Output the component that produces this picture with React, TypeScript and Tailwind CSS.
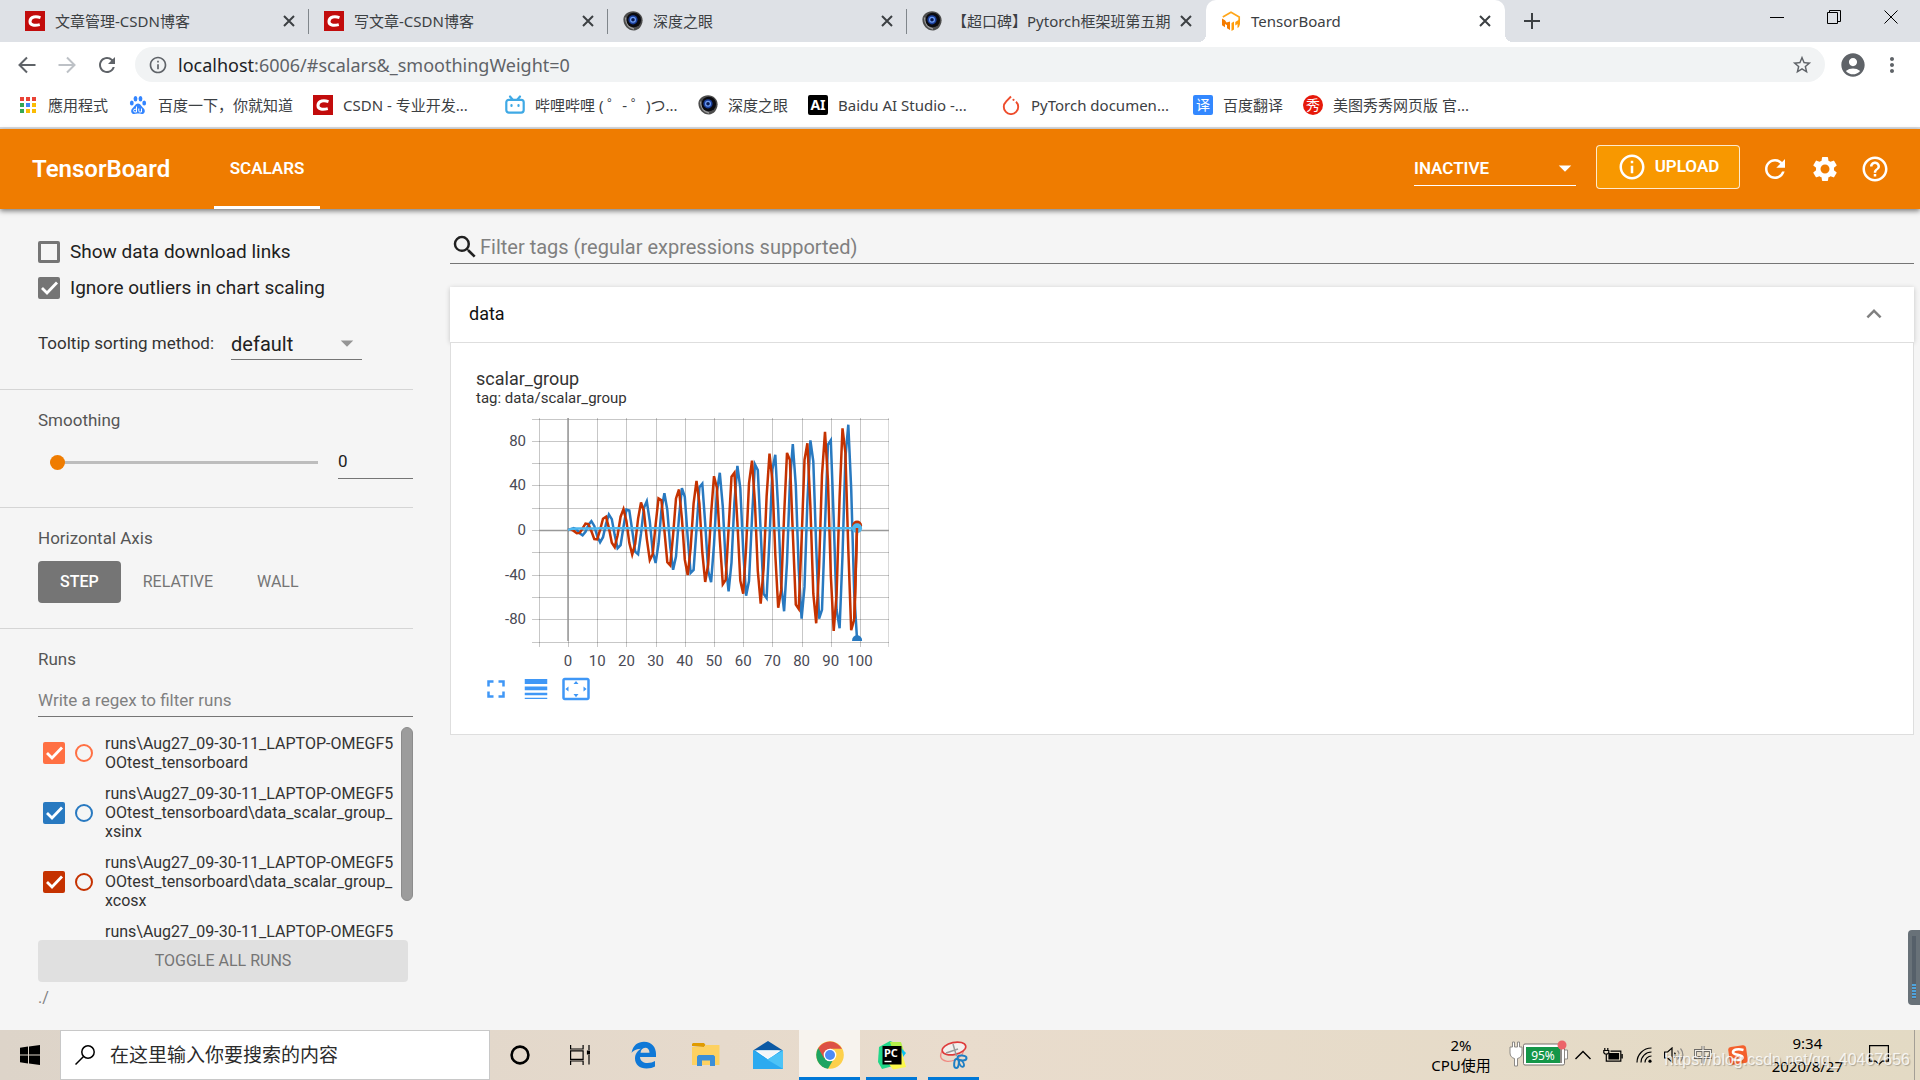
import { useState, type ReactNode } from "react";
import {
  MdAccountCircle,
  MdArrowDropDown,
  MdExpandLess,
  MdFullscreen,
  MdHelpOutline,
  MdInfoOutline,
  MdLineWeight,
  MdMoreVert,
  MdRefresh,
  MdSearch,
  MdSettings,
  MdSettingsOverscan,
  MdStarBorder,
} from "react-icons/md";

const uiFont = 'font-["Noto_Sans","Noto_Sans_CJK_SC",sans-serif]';

/* ---------- favicons ---------- */

function CsdnIcon() {
  return (
    <svg viewBox="0 0 20 20" className="size-5 shrink-0">
      <rect width="20" height="20" fill="#c20c0c" />
      <path d="M15.500 6.600C11 5.200 5.400 5.400 5 10.200c-.2 4.400 4.800 4.600 9.800 3.400" fill="none" stroke="#fff" strokeWidth="3" />
    </svg>
  );
}

function EyeIcon() {
  return (
    <svg viewBox="0 0 20 20" className="size-5 shrink-0">
      <path d="M10 .3c5.500 0 9.600 4 9.600 9 0 5.400-4 10.200-8.600 10.200C5 19.500.4 14.500.4 8.500.4 4 4.500.3 10 .3z" fill="#4c4c4c" />
      <path d="M2.500 6.500C3 13 6 17 11 18" stroke="#9a9a9a" strokeWidth="1.500" fill="none" />
      <circle cx="10.800" cy="9" r="7.300" fill="#0b0b10" />
      <circle cx="10" cy="8.800" r="4.600" fill="#1b3f9c" />
      <circle cx="10" cy="8.800" r="2.400" fill="#0a1a50" stroke="#6f9df0" strokeWidth="1.200" />
    </svg>
  );
}

function TensorIcon() {
  return (
    <svg viewBox="0 0 20 20" className="size-5 shrink-0">
      <path d="M1.800 6 10 1.200 18.200 6v3" fill="none" stroke="#ffa61a" strokeWidth="1.700" />
      <path d="M1 7.500 4 9.200l1.500 2.300L9 10.500V19l-3-1.700v-3L4 13v3.200l-3-2z" fill="#f57c00" />
      <path d="M10.500 12 13 10.500v8L10.500 20zM14.300 11 19 8v5l-1 3-1.500 1v-4l-2.200 1.500z" fill="#ff9d0a" />
    </svg>
  );
}

function AppsIcon() {
  const colors = ["#ea4335", "#ea4335", "#ea4335", "#34a853", "#4285f4", "#fbbc04", "#34a853", "#fbbc04", "#fbbc04"];
  return (
    <svg viewBox="0 0 20 20" className="size-5 shrink-0">
      {colors.map((c, i) => (
        <rect key={i} x={2 + (i % 3) * 6} y={2 + Math.floor(i / 3) * 6} width="4" height="4" fill={c} />
      ))}
    </svg>
  );
}

function BaiduIcon() {
  return (
    <svg viewBox="0 0 20 20" className="size-5 shrink-0" fill="#3385ff">
      <ellipse cx="3.800" cy="8" rx="1.900" ry="2.600" />
      <ellipse cx="7.500" cy="3.800" rx="1.900" ry="2.700" />
      <ellipse cx="12.500" cy="3.800" rx="1.900" ry="2.700" />
      <ellipse cx="16.200" cy="8" rx="1.900" ry="2.600" />
      <path d="M10 8.500c2.500 0 3.500 3 5.500 4.700 2.300 2 1.500 5.800-1.800 5.800-1.500 0-2.200-.4-3.700-.4s-2.200.4-3.700.4c-3.300 0-4.100-3.800-1.800-5.800C6.500 11.500 7.500 8.500 10 8.500z" />
      <path d="M8.500 11.500v5.500H7a1.400 1.400 0 0 1 0-2.800h1.500M10.800 13.500v2.300c0 .8.300 1.200 1 1.200h1.700v-3.500" fill="none" stroke="#fff" />
    </svg>
  );
}

function BilibiliIcon() {
  return (
    <svg viewBox="0 0 20 20" className="size-5 shrink-0" fill="none" stroke="#3fa9e5" strokeWidth="2.200" strokeLinecap="round">
      <path d="M5 1.500 7.500 4.500M15 1.500 12.500 4.500" />
      <rect x="1.300" y="4.800" width="17.400" height="12.800" rx="2.500" />
      <path d="M6.500 10v1M13.500 10v1" />
    </svg>
  );
}

function PyTorchIcon() {
  return (
    <svg viewBox="0 0 20 20" className="size-5 shrink-0">
      <path d="M10 1.500 5 6.700a7.200 7.200 0 1 0 10 0" fill="none" stroke="#ee4c2c" strokeWidth="1.900" />
      <circle cx="12.500" cy="4.800" r="1.100" fill="#ee4c2c" />
    </svg>
  );
}

function GlyphBadge({ glyph, className }: { glyph: string; className: string }) {
  return <span className={`flex size-5 shrink-0 items-center justify-center text-white ${className}`}>{glyph}</span>;
}

/* ---------- browser chrome ---------- */

const tabs = [
  { title: "文章管理-CSDN博客", icon: <CsdnIcon /> },
  { title: "写文章-CSDN博客", icon: <CsdnIcon /> },
  { title: "深度之眼", icon: <EyeIcon /> },
  { title: "【超口碑】Pytorch框架班第五期", icon: <EyeIcon /> },
  { title: "TensorBoard", icon: <TensorIcon />, active: true },
];

const bookmarks: { title: string; icon: ReactNode; width: string }[] = [
  { title: "應用程式", icon: <AppsIcon />, width: "w-[60px]" },
  { title: "百度一下，你就知道", icon: <BaiduIcon />, width: "w-[135px]" },
  { title: "CSDN - 专业开发...", icon: <CsdnIcon />, width: "w-[142px]" },
  { title: "哔哩哔哩 ( ゜- ゜)つ...", icon: <BilibiliIcon />, width: "w-[143px]" },
  { title: "深度之眼", icon: <EyeIcon />, width: "w-[60px]" },
  {
    title: "Baidu AI Studio -...",
    icon: <GlyphBadge glyph="AI" className="rounded-xs bg-black text-sm font-bold" />,
    width: "w-[143px]",
  },
  { title: "PyTorch documen...", icon: <PyTorchIcon />, width: "w-[142px]" },
  { title: "百度翻译", icon: <GlyphBadge glyph="译" className="rounded-xs bg-[#3388ff] text-sm" />, width: "w-[60px]" },
  { title: "美图秀秀网页版 官...", icon: <GlyphBadge glyph="秀" className="rounded-full bg-[#e6190a] text-sm" />, width: "w-[142px]" },
];

function TabStrip() {
  return (
    <div className="flex h-[42px] items-stretch bg-[#dee1e6] pl-[10px] text-[15px] text-[#3c4043]">
      {tabs.map((tab, i) => (
        <div
          key={i}
          className={`relative flex w-[299px] min-w-0 items-center pr-3 pl-[15px] ${
            tab.active ? "rounded-t-[10px] bg-white" : ""
          }`}
        >
          {tab.active && (
            <>
              <span className="absolute bottom-0 -left-2 size-2 bg-[radial-gradient(circle_at_0_0,#dee1e6_8px,#fff_8px)]" />
              <span className="absolute -right-2 bottom-0 size-2 bg-[radial-gradient(circle_at_100%_0,#dee1e6_8px,#fff_8px)]" />
            </>
          )}
          {tab.icon}
          <span className="ml-[10px] flex-1 whitespace-nowrap">{tab.title}</span>
          <button type="button" aria-label="关闭标签页" className="shrink-0">
            <svg viewBox="0 0 16 16" className="size-4" stroke="currentColor" strokeWidth="2">
              <path d="M3 3l10 10M13 3 3 13" />
            </svg>
          </button>
          {i < 3 && <span className="absolute right-0 h-[25px] w-px bg-[#80868b]" />}
        </div>
      ))}
      <button type="button" aria-label="新标签页" className="ml-[19px] flex items-center">
        <svg viewBox="0 0 16 16" className="size-4" stroke="#3c4043" strokeWidth="2">
          <path d="M8 0v16M0 8h16" />
        </svg>
      </button>
      <div className="mr-px ml-auto flex h-[34px] text-black">
        <button type="button" aria-label="最小化" className="flex w-[57px] items-center justify-center">
          <svg viewBox="0 0 14 14" className="size-[14px]" stroke="currentColor">
            <path d="M0 7.500h14" />
          </svg>
        </button>
        <button type="button" aria-label="还原" className="flex w-[57px] items-center justify-center">
          <svg viewBox="0 0 14 14" className="size-[14px]" fill="none" stroke="currentColor">
            <path d="M.5 2.500h10v11H.5zM2.500 2.500v-2h11v11h-3" />
          </svg>
        </button>
        <button type="button" aria-label="关闭" className="flex w-[57px] items-center justify-center">
          <svg viewBox="0 0 14 14" className="size-[14px]" stroke="currentColor">
            <path d="M.5.5l13 13M13.500.5l-13 13" />
          </svg>
        </button>
      </div>
    </div>
  );
}

function AddressBar() {
  return (
    <div className="flex h-[45px] items-center bg-white pr-4 pl-[7px] text-[#5f6368]">
      <button type="button" aria-label="后退" className="flex w-10 justify-center">
        <svg viewBox="0 0 18 18" className="size-[18px]" fill="none" stroke="#5f6368" strokeWidth="2">
          <path d="M17.500 9H2M9 1.500 1.500 9 9 16.500" />
        </svg>
      </button>
      <button type="button" aria-label="前进" className="flex w-10 justify-center">
        <svg viewBox="0 0 18 18" className="size-[18px]" fill="none" stroke="#bdc1c6" strokeWidth="2">
          <path d="M.5 9H16M9 1.500 16.500 9 9 16.500" />
        </svg>
      </button>
      <button type="button" aria-label="重新加载" className="mr-2 flex w-10 justify-center">
        <MdRefresh className="size-6" />
      </button>
      <div className="flex h-[35px] flex-1 items-center rounded-full bg-[#f1f3f4] pr-3 pl-[13px]">
        <MdInfoOutline className="size-5" />
        <div className="ml-[10px] flex-1 text-lg">
          <span className="text-[#202124]">localhost</span>:6006/#scalars&amp;_smoothingWeight=0
        </div>
        <button type="button" aria-label="收藏">
          <MdStarBorder className="size-[22px]" />
        </button>
      </div>
      <button type="button" aria-label="用户" className="ml-[14px]">
        <MdAccountCircle className="size-7" />
      </button>
      <button type="button" aria-label="菜单" className="ml-[13px]">
        <MdMoreVert className="size-6" />
      </button>
    </div>
  );
}

function BookmarksBar() {
  return (
    <nav className="flex h-[42px] items-center gap-5 overflow-hidden border-b-2 border-[#dadce0] bg-white pb-1 pl-[18px] text-[15px] text-[#3c4043]">
      {bookmarks.map((b) => (
        <a key={b.title} href="#" className="flex shrink-0 items-center gap-[10px]">
          {b.icon}
          <span className={`whitespace-nowrap ${b.width}`}>{b.title}</span>
        </a>
      ))}
    </nav>
  );
}

/* ---------- TensorBoard ---------- */

function BoardHeader() {
  return (
    <header className="relative z-10 flex h-20 items-stretch bg-[#ef7c00] pr-5 pl-8 font-semibold text-white shadow-[0_2px_5px_rgba(0,0,0,0.5)]">
      <h1 className="flex w-[138px] items-center text-2xl">TensorBoard</h1>
      <button type="button" className="ml-11 w-[106px] border-b-3 border-white pt-[3px] text-[17px]">
        SCALARS
      </button>
      <div className="ml-auto flex items-center">
        <div className="relative">
          <select aria-label="Inactive dashboards" className="h-[33px] w-[162px] appearance-none border-b border-white text-[17px]">
            <option>INACTIVE</option>
          </select>
          <MdArrowDropDown className="pointer-events-none absolute top-0 -right-1 size-[30px]" />
        </div>
        <button
          type="button"
          className="mr-[10px] mb-1 ml-5 flex h-11 w-36 items-center justify-center gap-2 rounded border border-white/80 bg-[#f89800] text-[17px]"
        >
          <MdInfoOutline className="size-[30px]" />
          UPLOAD
        </button>
        <button type="button" aria-label="Reload" className="flex w-[50px] justify-center">
          <MdRefresh className="size-[30px]" />
        </button>
        <button type="button" aria-label="Settings" className="flex w-[50px] justify-center">
          <MdSettings className="size-[30px]" />
        </button>
        <button type="button" aria-label="Help" className="flex w-[50px] justify-center">
          <MdHelpOutline className="size-[30px]" />
        </button>
      </div>
    </header>
  );
}

function CheckMark() {
  return (
    <svg
      viewBox="0 0 22 22"
      className="pointer-events-none absolute inset-0 size-[22px]"
      fill="none"
      stroke="#fff"
      strokeWidth="2.800"
    >
      <path d="M4 11l5 5L19 5.500" />
    </svg>
  );
}

function OptionCheckbox({ label, initial }: { label: string; initial: boolean }) {
  const [checked, setChecked] = useState(initial);
  return (
    <label className="flex h-9 items-center gap-[10px] text-[19px] text-[#212121]">
      <span className="relative flex">
        <input
          type="checkbox"
          checked={checked}
          onChange={() => setChecked(!checked)}
          className="size-[22px] appearance-none rounded-xs border-3 border-[#757575] checked:bg-[#757575]"
        />
        {checked && <CheckMark />}
      </span>
      {label}
    </label>
  );
}

const runs = [
  { name: "runs\\Aug27_09-30-11_LAPTOP-OMEGF5OOtest_tensorboard", color: "border-[#ff7043]", fill: "bg-[#ff7043]" },
  {
    name: "runs\\Aug27_09-30-11_LAPTOP-OMEGF5OOtest_tensorboard\\data_scalar_group_xsinx",
    color: "border-[#2879c0]",
    fill: "bg-[#2879c0]",
  },
  {
    name: "runs\\Aug27_09-30-11_LAPTOP-OMEGF5OOtest_tensorboard\\data_scalar_group_xcosx",
    color: "border-[#c53200]",
    fill: "bg-[#c53200]",
  },
  {
    name: "runs\\Aug27_09-30-11_LAPTOP-OMEGF5OOtest_tensorboard\\data_scalar_group_arctanx",
    color: "border-[#4fb8ef]",
    fill: "bg-[#4fb8ef]",
  },
];

function RunsList() {
  return (
    <div className="mt-[10px] flex h-[213px] justify-between overflow-hidden">
      <ul className="min-w-0 pt-px pl-[5px]">
        {runs.map((run) => (
          <li key={run.name} className="flex items-center py-1.5">
            <span className="relative flex">
              <input
                type="checkbox"
                aria-label={run.name}
                defaultChecked
                className={`size-[22px] appearance-none rounded-xs ${run.fill}`}
              />
              <CheckMark />
            </span>
            <input
              type="radio"
              name="isolate-run"
              aria-label={`Isolate ${run.name}`}
              className={`ml-[10px] size-[18px] shrink-0 appearance-none rounded-full border-2 ${run.color}`}
            />
            <span className="ml-3 w-[294px] text-base leading-[19px] break-all text-[#333]">{run.name}</span>
          </li>
        ))}
      </ul>
      <div className="h-[174px] w-3 shrink-0 rounded-full border border-[#8c8c8c] bg-[#9c9c9c]" />
    </div>
  );
}

function Sidebar() {
  const [axis, setAxis] = useState("STEP");
  return (
    <aside className="w-[413px] shrink-0 text-[17px] text-[#555]">
      <section className="border-b border-[#d5d5d5] pt-[25px] pb-[29px] pl-[38px]">
        <OptionCheckbox label="Show data download links" initial={false} />
        <OptionCheckbox label="Ignore outliers in chart scaling" initial={true} />
        <div className="mt-[18px] flex h-9 items-center gap-[17px] text-[#333]">
          <label htmlFor="sorting" className="pt-1">
            Tooltip sorting method:
          </label>
          <div className="relative">
            <select id="sorting" className="h-9 w-[131px] appearance-none border-b border-[#757575] pt-1 text-xl text-[#212121]">
              <option>default</option>
            </select>
            <MdArrowDropDown className="pointer-events-none absolute top-1 right-0 size-[30px] text-[#959595]" />
          </div>
        </div>
      </section>

      <section className="border-b border-[#d5d5d5] pt-5 pb-7 pl-[38px]">
        <h3 className="leading-5">Smoothing</h3>
        <div className="mt-[13px] flex h-9 items-center justify-between pl-3">
          <input
            type="range"
            aria-label="Smoothing"
            min={0}
            max={1}
            step={0.01}
            defaultValue={0}
            className="mt-0.5 h-[3px] w-[268px] appearance-none bg-[#bdbdbd] [&::-webkit-slider-thumb]:size-[15px] [&::-webkit-slider-thumb]:appearance-none [&::-webkit-slider-thumb]:rounded-full [&::-webkit-slider-thumb]:bg-[#ef7c00]"
          />
          <input
            type="text"
            aria-label="Smoothing value"
            defaultValue="0"
            className="h-9 w-[75px] border-b border-[#757575] text-[17px] text-[#212121]"
          />
        </div>
      </section>

      <section className="border-b border-[#d5d5d5] pt-5 pb-[25px] pl-[38px]">
        <h3 className="leading-5">Horizontal Axis</h3>
        <div className="mt-[13px] flex text-base">
          {["STEP", "RELATIVE", "WALL"].map((name) => (
            <button
              key={name}
              type="button"
              onClick={() => setAxis(name)}
              className={`h-[42px] rounded px-[22px] ${
                axis === name ? "bg-[#757575] font-medium text-white" : "text-[#757575]"
              }`}
            >
              {name}
            </button>
          ))}
        </div>
      </section>

      <section className="pt-5 pl-[38px]">
        <h3 className="leading-5">Runs</h3>
        <input
          type="text"
          aria-label="Write a regex to filter runs"
          placeholder="Write a regex to filter runs"
          className="mt-[14px] h-[34px] w-full border-b border-[#757575] text-[17px] placeholder:text-[#808080]"
        />
        <RunsList />
        <button type="button" className="h-[42px] w-[370px] rounded bg-[#e0e0e0] text-base text-[#757575]">
          TOGGLE ALL RUNS
        </button>
        <div className="mt-1 text-base text-[#808080]">./</div>
      </section>
    </aside>
  );
}

/* chart coordinates: step 0 sits at x=92, value 0 at y=112 */
const sx = (step: number) => 92 + step * 2.92;
const sy = (value: number) => 112 - value * 1.115;
const linePath = (fn: (x: number) => number) =>
  Array.from({ length: 100 }, (_, i) => `${i ? "L" : "M"}${sx(i).toFixed(1)} ${sy(fn(i)).toFixed(1)}`).join("");

const series = [
  { color: "#2879c0", fn: (x: number) => x * Math.sin(x) },
  { color: "#c53200", fn: (x: number) => x * Math.cos(x) },
  { color: "#4fb8ef", fn: (x: number) => Math.atan(x) },
];

function ScalarChart() {
  const xTicks = [0, 10, 20, 30, 40, 50, 60, 70, 80, 90, 100];
  const yTicks = [100, 80, 60, 40, 20, 0, -20, -40, -60, -80, -100];
  return (
    <svg viewBox="0 0 420 255" className="h-[255px] w-[420px]" role="img" aria-label="scalar_group">
      <defs>
        <clipPath id="plot">
          <rect x="63" y="0" width="350" height="223" />
        </clipPath>
      </defs>
      <g stroke="#000" strokeOpacity="0.22" shapeRendering="crispEdges">
        {[-10, ...xTicks].map((t) => (
          <path key={t} d={`M${Math.round(sx(t))}.5 0V229`} />
        ))}
        <path d="M412.500 0V229" strokeOpacity="0.15" />
        {yTicks.map((t) => (
          <path key={t} d={`M56 ${Math.round(sy(t))}.5H413`} />
        ))}
      </g>
      <path d="M92 0V223M63 112.500H413" stroke="#999" strokeWidth="1.500" />
      <g clipPath="url(#plot)" fill="none" strokeWidth="2.500">
        {series.map((s) => (
          <path key={s.color} d={linePath(s.fn)} stroke={s.color} />
        ))}
        {series.map((s) => (
          <circle key={s.color} cx={sx(99)} cy={sy(s.fn(99))} r="5" fill={s.color} />
        ))}
        <path d="M378.500 200 381 110" stroke="#c53200" />
      </g>
      <g fill="#4a4a55" fontSize="15">
        {[80, 40, 0, -40, -80].map((t) => (
          <text key={t} x="50" y={sy(t) + 5} textAnchor="end">
            {t}
          </text>
        ))}
        {xTicks.map((t) => (
          <text key={t} x={sx(t)} y="248" textAnchor="middle">
            {t}
          </text>
        ))}
      </g>
    </svg>
  );
}

function MainPane() {
  return (
    <main className="min-w-0 flex-1 pt-5 pr-1.5 pl-[37px]">
      <label className="flex h-[35px] items-center border-b border-[#757575]">
        <MdSearch className="mt-0.5 size-[30px] text-[#212121]" />
        <input
          type="text"
          aria-label="Filter tags"
          placeholder="Filter tags (regular expressions supported)"
          className="h-8 flex-1 pt-0.5 text-xl outline-none placeholder:text-[#808080]"
        />
      </label>
      <section className="mt-[23px]">
        <button
          type="button"
          className="relative flex h-[55px] w-full items-center justify-between bg-white pr-[25px] pb-0.5 pl-[19px] text-lg text-[#111] shadow-[0_1px_5px_rgba(0,0,0,0.2)]"
        >
          data
          <MdExpandLess className="size-[30px] text-[#808080]" />
        </button>
        <div className="relative border border-[#dedede] bg-white pt-6 pb-[30px] pl-[25px]">
          <h2 className="text-lg leading-6 text-[#333]">scalar_group</h2>
          <p className="text-[15px] leading-[14px] text-[#333]">tag: data/scalar_group</p>
          <div className="mt-[13px]">
            <ScalarChart />
          </div>
          <div className="mt-px flex gap-[10px] pl-[5px] text-[#3f97f6]">
            <button type="button" aria-label="Toggle fullscreen">
              <MdFullscreen className="size-[30px]" />
            </button>
            <button type="button" aria-label="Toggle log scale">
              <MdLineWeight className="size-[30px]" />
            </button>
            <button type="button" aria-label="Fit domain to data">
              <MdSettingsOverscan className="size-[30px]" />
            </button>
          </div>
        </div>
      </section>
    </main>
  );
}

/* ---------- Windows taskbar ---------- */

function CortanaIcon() {
  return (
    <svg viewBox="0 0 20 20" className="size-5" fill="none" stroke="#000" strokeWidth="2.600">
      <circle cx="10" cy="10" r="8.400" />
    </svg>
  );
}

function TaskViewIcon() {
  return (
    <svg viewBox="0 0 20 20" className="size-5" fill="none" stroke="#000" strokeWidth="1.200">
      <path d="M.6 0v4h12.500V0M.6 20v-4h12.500v4M.6 5.800h12.500v8.500H.6zM19 0v5M19 10v9.500" />
      <path d="M17.500 6h3v3h-3z" fill="#000" />
    </svg>
  );
}

function EdgeIcon() {
  return (
    <svg viewBox="0 0 26 28" className="h-7 w-[26px]" fill="#0f78d7">
      <path d="M.5 12C2 4 7 .8 13 .8c8 0 12 6 12 12.200v3H9c.3 4 3.500 6 7.500 6 3 0 5.500-.8 7.500-2v5.500c-2 1.200-5 2-8.500 2C8.500 27.500 4 23.500 4 17.500c0-4.500 2.500-8 6-9.800C4.500 8 2 10 .5 12zm9-.2h9c0-3-1.500-5-4.300-5s-4.400 2.200-4.700 5z" />
    </svg>
  );
}

function FolderIcon() {
  return (
    <svg viewBox="0 0 28 26" className="h-[26px] w-7">
      <path d="M0 4V2l1-1h11l1.500 2L12 5z" fill="#e09b00" />
      <path d="M0 5h12l2-2h13.500v20H0z" fill="#fdd161" />
      <path d="M5 24V14.500l1.500-1.500h15l1.500 1.500V24h-5v-5.500h-8V24z" fill="#3b8fd8" />
    </svg>
  );
}

function MailIcon() {
  return (
    <svg viewBox="0 0 30 28" className="h-7 w-[30px]">
      <path d="M0 9.500 15 0l15 9.500z" fill="#0c59a4" />
      <path d="M0 9.500h30V28H0z" fill="#1f9ee8" />
      <path d="M2 9.500h26l-13 9z" fill="#fff" />
      <path d="M0 9.500 30 28H0z" fill="#2caaf0" />
      <path d="M30 9.500V28L14 18.500z" fill="#4cc3f7" />
      <path d="M4 9.500h22l-11 8z" fill="#f4f6f8" />
    </svg>
  );
}

function ChromeIcon() {
  return (
    <svg viewBox="0 0 28 28" className="size-7">
      <circle cx="14" cy="14" r="13.800" fill="#fdd04a" />
      <path d="M14 14 2.200 7A13.800 13.800 0 0 0 12 27.700l6-10.500z" fill="#1da462" />
      <path d="M2.200 7a13.800 13.800 0 0 1 23.800 0.800H14l-6 9.500z" fill="#dd5144" />
      <circle cx="14" cy="14" r="6.300" fill="#fff" />
      <circle cx="14" cy="14" r="5" fill="#4c8bf5" />
    </svg>
  );
}

function PyCharmIcon() {
  return (
    <svg viewBox="0 0 30 30" className="size-[30px]">
      <path d="M2 7 13 1l8 3-5 22-11 3L1 22z" fill="#21d789" />
      <path d="M13 2h11l3 9-9 6z" fill="#b5f04a" />
      <path d="M24 8l5 5-3 4z" fill="#07c3f2" />
      <path d="M25 13l4 14-13 2.500L12 24z" fill="#fcf84a" />
      <rect x="5.500" y="6" width="19" height="18.500" fill="#000" />
      <text x="7" y="16.500" fontSize="11" fontWeight="700" fill="#fff">
        PC
      </text>
      <path d="M7.500 21.500h7" stroke="#fff" strokeWidth="1.400" />
    </svg>
  );
}

function SnipIcon() {
  return (
    <svg viewBox="0 0 30 30" className="size-[30px]" fill="none">
      <ellipse cx="13" cy="13" rx="12" ry="7.500" transform="rotate(-22 13 13)" stroke="#f08a82" strokeWidth="1.200" />
      <ellipse cx="15" cy="8.500" rx="12" ry="6" transform="rotate(-12 15 8.500)" fill="#f3f0ee" stroke="#de3b3b" strokeWidth="1.600" />
      <path d="M14 4l3.500 12M7 13l12-4" stroke="#9a9a9a" strokeWidth="1.500" />
      <ellipse cx="23" cy="18" rx="4.500" ry="2.400" transform="rotate(5 23 18)" stroke="#1f7fc4" strokeWidth="2" />
      <ellipse cx="17.500" cy="23.500" rx="2.300" ry="4.500" transform="rotate(5 17.500 23.500)" stroke="#1f7fc4" strokeWidth="2" />
      <ellipse cx="22.500" cy="23.500" rx="2" ry="3.500" transform="rotate(-28 22.500 23.500)" stroke="#1f7fc4" strokeWidth="1.800" />
    </svg>
  );
}

function TrayIcons() {
  return (
    <div className="flex items-center">
      <svg viewBox="0 0 62 30" className="h-[30px] w-[62px]" role="img" aria-label="95%">
        <path d="M3.500 2v5H1v6c0 3 2 5 4.500 5.500V26h3v-7.500C11 18 13 16 13 13V7h-2.500V2H8.500v5h-3V2z" fill="#fff" stroke="#8d8a86" />
        <rect x="14.500" y="4" width="41" height="21" rx="1.500" fill="#fff" stroke="#77736f" />
        <path d="M55.500 10h3v9h-3z" fill="#fff" stroke="#8d8a86" />
        <rect x="17" y="7" width="34" height="16" fill="#149648" />
        <path d="M51 7h2v16h-2z" fill="#8d8a86" />
        <text x="34" y="19.500" fontSize="12" fill="#fff" textAnchor="middle">
          95%
        </text>
        <circle cx="53" cy="5" r="4.500" fill="#ec6469" />
      </svg>
      <svg viewBox="0 0 16 10" className="ml-1 h-[10px] w-4" fill="none" stroke="#000" strokeWidth="1.400">
        <path d="M.5 9 8 1.500 15.500 9" />
      </svg>
      <svg viewBox="0 0 20 14" className="ml-3 h-[14px] w-5" fill="none" stroke="#000" strokeWidth="1.200">
        <path d="M1.800 0v2.500M4.800 0v2.500M.8 2.500h5v2.200L4.500 6H2L.8 4.700zM3.300 6v7.200h14.500v-10H7.500M19.200 6v4.500" />
        <path d="M6 5.500h9.500v5.500H6z" fill="#000" />
      </svg>
      <svg viewBox="0 0 16 16" className="ml-[13px] size-4" fill="none" stroke="#000" strokeWidth="1.200">
        <path d="M1 15.500A14.500 14.500 0 0 1 15.500 1M5 15.500A10.500 10.500 0 0 1 15.500 5M9 15.500A6.500 6.500 0 0 1 15.500 9" />
        <circle cx="14" cy="14.200" r="1.600" fill="#000" stroke="none" />
      </svg>
      <svg viewBox="0 0 20 16" className="ml-3 h-4 w-5" fill="none" stroke="#000" strokeWidth="1.200">
        <path d="M.6 5h3L8 1v14l-4.400-4H.6z" />
        <path d="M10.500 5.500a4 4 0 0 1 0 5" />
        <path d="M13.500 3.500a7 7 0 0 1 0 9M16.500 1.500a10 10 0 0 1 0 13" stroke="#8d8a86" />
      </svg>
      <svg viewBox="0 0 18 20" className="ml-[10px] h-5 w-[18px]" fill="none">
        <path d="M1.500 5.500h15v7h-15zM9 1v18" stroke="#6d6a66" strokeWidth="3" />
        <path d="M1.500 5.500h15v7h-15zM9 1v18" stroke="#f3efe8" strokeWidth="1.200" />
      </svg>
      <svg viewBox="0 0 20 20" className="ml-4 size-5">
        <rect x="1" y="1" width="18" height="18" rx="3" fill="#f4602c" transform="rotate(-8 10 10)" />
        <path d="M15.500 5C10 3.500 5 4.500 5 7.200c0 3.300 9.500 1.800 9.500 5C14.500 15 9 15.800 4 14.300" fill="none" stroke="#fff" strokeWidth="2.600" />
      </svg>
    </div>
  );
}

function Taskbar() {
  return (
    <footer className="relative flex h-[50px] items-stretch bg-linear-to-r from-[#ddd4c9] via-[#e9dccd] to-[#e3dac4] text-[15px] text-black">
      <button type="button" aria-label="开始" className="flex w-[60px] items-center justify-center">
        <svg viewBox="0 0 20 20" className="size-5">
          <path d="M0 2.700 8 1.600V9.500H0zM9 1.400 20 0v9.500H9zM0 10.500h8v7.900L0 17.300zM9 10.500h11V20L9 18.500z" />
        </svg>
      </button>
      <label className="flex w-[430px] shrink-0 items-center gap-[15px] border border-[#c8c8c8] bg-white pl-[14px]">
        <svg viewBox="0 0 20 20" className="size-5" fill="none" stroke="#000" strokeWidth="1.500">
          <circle cx="13" cy="7" r="6.200" />
          <path d="M8.500 11.500.5 19.500" />
        </svg>
        <input
          type="text"
          aria-label="搜索"
          placeholder="在这里输入你要搜索的内容"
          className="h-10 flex-1 text-[19px] placeholder:text-[#2b2b2b]"
        />
      </label>
      <button type="button" aria-label="Cortana" className="flex w-[60px] items-center justify-center">
        <CortanaIcon />
      </button>
      <button type="button" aria-label="任务视图" className="flex w-[60px] items-center justify-center">
        <TaskViewIcon />
      </button>
      <button type="button" aria-label="Edge" className="ml-[3px] flex w-[62px] items-center justify-center">
        <EdgeIcon />
      </button>
      <button type="button" aria-label="文件资源管理器" className="flex w-[62px] items-center justify-center">
        <FolderIcon />
      </button>
      <button type="button" aria-label="邮件" className="flex w-[62px] items-center justify-center">
        <MailIcon />
      </button>
      <button type="button" aria-label="Chrome" className="flex w-[61px] items-center justify-center border-b-3 border-[#0078d7] bg-[#f7f3ee] pt-[3px]">
        <ChromeIcon />
      </button>
      <button type="button" aria-label="PyCharm" className="ml-1.5 flex w-[51px] items-center justify-center border-b-3 border-[#0078d7] pt-[3px]">
        <PyCharmIcon />
      </button>
      <button type="button" aria-label="截图工具" className="ml-[11px] flex w-[51px] items-center justify-center border-b-3 border-[#0078d7] pt-[3px]">
        <SnipIcon />
      </button>
      <div className="ml-auto flex items-center">
        <div className="mr-[18px] text-center leading-5">
          <div>2%</div>
          <div>CPU使用</div>
        </div>
        <TrayIcons />
        <div className="ml-6 text-center leading-[23px]">
          <div>9:34</div>
          <div>2020/8/27</div>
        </div>
        <button type="button" aria-label="通知" className="mr-[25px] ml-[26px]">
          <svg viewBox="0 0 20 20" className="size-5" fill="none" stroke="#000" strokeWidth="1.200">
            <path d="M.6.6h18.800v15.500h-6L10 19.300l-3.400-3.200h-6z" />
          </svg>
        </button>
        <span className="h-full w-1.5 border-l border-[#a49f96]" />
      </div>
      <div className='pointer-events-none absolute right-[10px] bottom-1.5 font-["Liberation_Sans",sans-serif] text-base leading-7 text-white/80 [text-shadow:1px_1px_1px_rgba(0,0,0,0.25)]'>
        https://blog.csdn.net/qq_40467656
      </div>
    </footer>
  );
}

export default function App() {
  return (
    <div className={`relative flex min-h-screen flex-col bg-[#f5f5f5] ${uiFont}`}>
      <TabStrip />
      <AddressBar />
      <BookmarksBar />
      <div className="flex flex-1 flex-col font-[Roboto,sans-serif]">
        <BoardHeader />
        <div className="flex flex-1">
          <Sidebar />
          <MainPane />
        </div>
      </div>
      <Taskbar />
      <div className="absolute right-0 bottom-[75px] flex h-[75px] w-3 justify-center rounded-l bg-[#687178] py-1.5">
        <div className="flex w-1 flex-col justify-end bg-[#56606a]">
          <div className="h-[15px] bg-[repeating-linear-gradient(#4fa3dc_0_2px,#56606a_2px_3px)]" />
        </div>
      </div>
    </div>
  );
}
